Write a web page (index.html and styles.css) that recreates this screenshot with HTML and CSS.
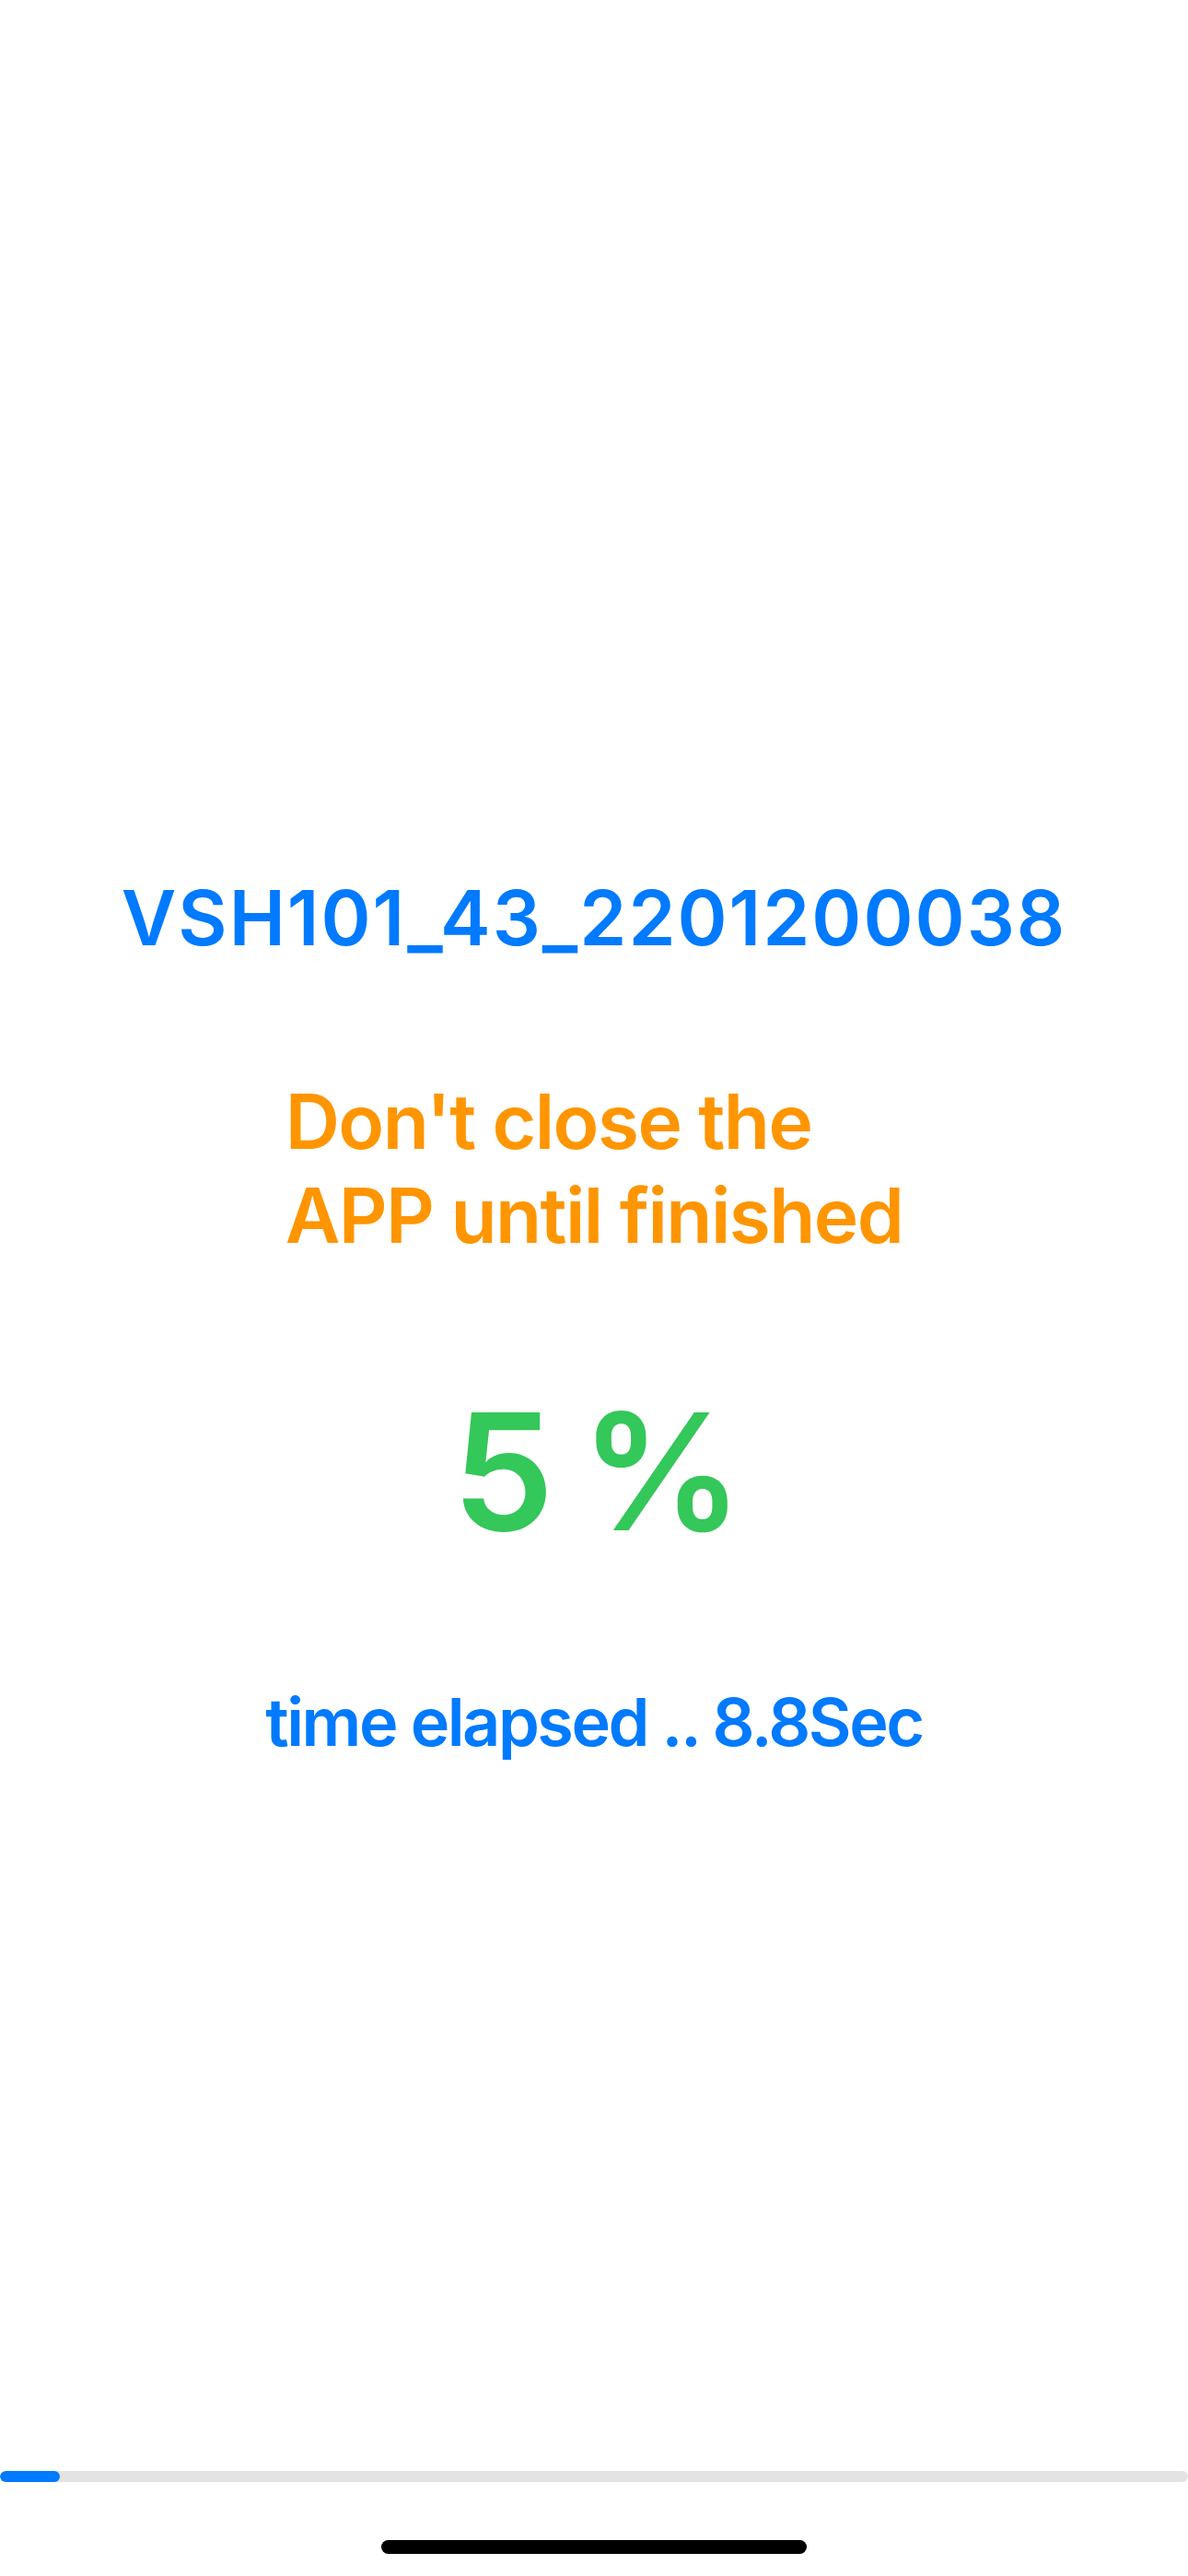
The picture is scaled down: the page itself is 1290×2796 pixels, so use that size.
FILE: index.html
```html
<!DOCTYPE html>
<html lang="en">
<head>
    <meta charset="UTF-8">
    <meta name="viewport" content="width=device-width, initial-scale=1.0">
    <title>Upload</title>
    <link rel="stylesheet" href="styles.css">
</head>
<body>
    <div class="screen">
        <main class="status">
            <h1 class="device-id">VSH101_43_2201200038</h1>
            <p class="warning">Don't close the<br>APP until finished</p>
            <div class="percent">5 %</div>
            <p class="elapsed">time elapsed .. 8.8Sec</p>
        </main>

        <div class="progress">
            <div class="progress-fill" style="width: 5%"></div>
        </div>
        <div class="home-bar"></div>
    </div>
</body>
</html>
```

FILE: styles.css
```css
* {
    margin: 0;
    padding: 0;
    box-sizing: border-box;
}

body {
    font-family: 'Inter', 'Noto Sans', sans-serif;
    background: #ffffff;
}

.screen {
    height: 100vh;
    display: flex;
    flex-direction: column;
}

.status {
    padding-top: 946px;
    display: flex;
    flex-direction: column;
    align-items: center;
    text-align: center;
}

.device-id {
    font-size: 82px;
    line-height: 102px;
    font-weight: 600;
    letter-spacing: 2px;
    color: #007aff;
}

.warning {
    margin-top: 119px;
    font-size: 82px;
    line-height: 102px;
    font-weight: 600;
    letter-spacing: -1.6px;
    color: #ff9500;
    text-align: left;
}

.percent {
    margin-top: 126px;
    font-size: 176px;
    line-height: 200px;
    font-weight: 600;
    letter-spacing: -8px;
    color: #34c759;
}

.elapsed {
    margin-top: 127px;
    font-size: 72px;
    line-height: 90px;
    font-weight: 600;
    letter-spacing: -2.5px;
    color: #007aff;
}

/* bottom progress track */
.progress {
    margin-top: auto;
    height: 12px;
    background: #e3e3e3;
    border-radius: 6px;
    overflow: hidden;
}

.progress-fill {
    height: 100%;
    background: #007aff;
    border-radius: 6px;
}

.home-bar {
    width: 462px;
    height: 15px;
    margin: 63px auto 24px;
    background: #000000;
    border-radius: 8px;
}
```
